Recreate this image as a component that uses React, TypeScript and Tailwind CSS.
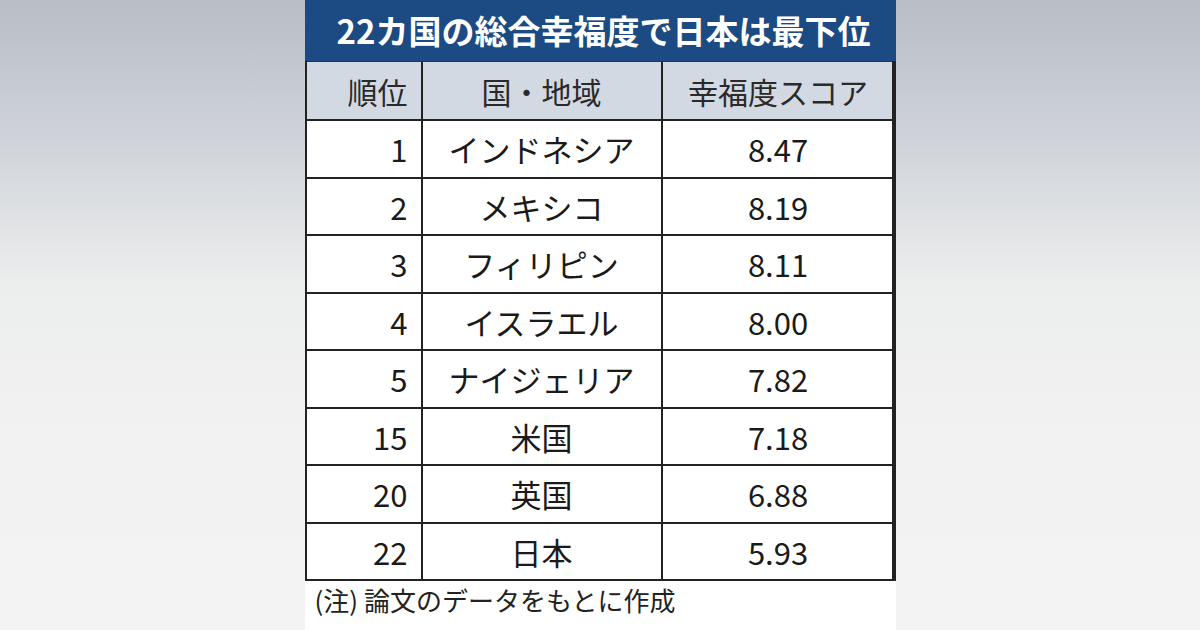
import React from "react";

const rows = [
  ["1", "インドネシア", "8.47"],
  ["2", "メキシコ", "8.19"],
  ["3", "フィリピン", "8.11"],
  ["4", "イスラエル", "8.00"],
  ["5", "ナイジェリア", "7.82"],
  ["15", "米国", "7.18"],
  ["20", "英国", "6.88"],
  ["22", "日本", "5.93"],
];

export default function App() {
  return (
    <div
      className="w-[1200px] h-[630px] flex justify-center overflow-hidden bg-[linear-gradient(180deg,#b8bdc6_0%,#cfd3d9_22%,#eceded_45%,#f2f2f2_70%,#f3f3f3_100%)]"
      style={{ fontFamily: '"Noto Sans CJK JP", "Noto Sans", sans-serif' }}
    >
      <div className="w-[591px] h-[630px] bg-white flex flex-col">
        <div className="h-[61px] bg-[#1c4a82] flex items-center pl-[32px] text-white font-bold text-[33px] leading-none whitespace-nowrap">
          22カ国の総合幸福度で日本は最下位
        </div>
        <div className="border-l-[2px] border-r-[4px] border-b-[2px] border-[#222] text-[#1a1a1a]">
          <div className="h-[58px] flex bg-[#d2d9e3] border-t-[1px] border-[#333] text-[30px] leading-none text-[#2a2a2a]">
            <div className="w-[116px] border-r-[2px] border-[#222] flex items-center justify-end pr-[13px]">順位</div>
            <div className="w-[240px] border-r-[2px] border-[#222] flex items-center justify-center">国・地域</div>
            <div className="flex-1 flex items-center justify-center pl-[2px]">幸福度スコア</div>
          </div>
          {rows.map((r, i) => (
            <div key={i} className="h-[57.5px] flex border-t-[2px] border-[#222] text-[31px] leading-none">
              <div className="w-[116px] border-r-[2px] border-[#222] flex items-center justify-end pr-[13px]">{r[0]}</div>
              <div className="w-[240px] border-r-[2px] border-[#222] flex items-center justify-center">{r[1]}</div>
              <div className="flex-1 flex items-center justify-center pl-[2px]">{r[2]}</div>
            </div>
          ))}
        </div>
        <div className="pl-[10px] pt-[6px] text-[26px] leading-none text-[#222]">(注) 論文のデータをもとに作成</div>
      </div>
    </div>
  );
}
